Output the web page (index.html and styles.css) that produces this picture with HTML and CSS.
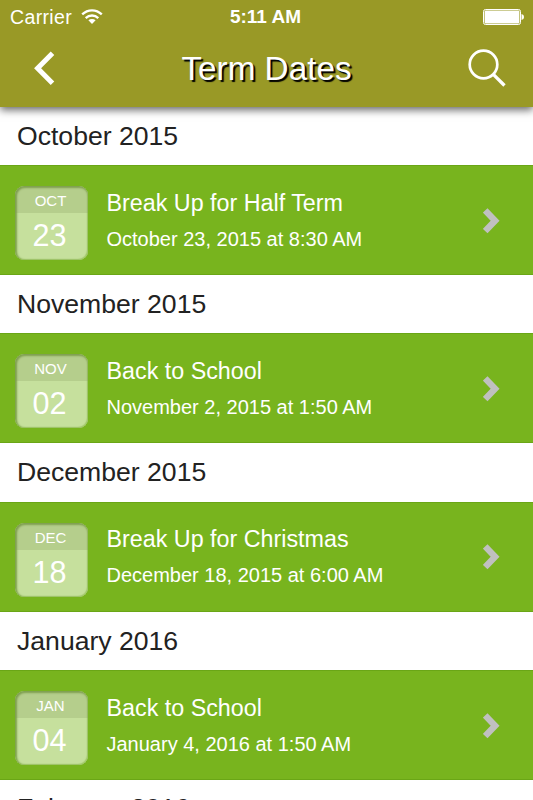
FILE: index.html
```html
<!DOCTYPE html>
<html lang="en">
<head>
    <meta charset="UTF-8">
    <meta name="viewport" content="width=device-width, initial-scale=1.0">
    <title>Term Dates</title>
    <link rel="stylesheet" href="styles.css">
</head>
<body>

<header class="header">
    <div class="status-bar">
        <div class="carrier">
            <span>Carrier</span>
            <svg class="wifi" width="22" height="16" viewBox="0 0 22 16" fill="none" stroke="#fff" stroke-width="2.3">
                <path d="M1.2 5.4 C6.8 -0.1 15.2 -0.1 20.8 5.4"/>
                <path d="M4.7 9.1 C8.3 5.6 13.7 5.6 17.3 9.1"/>
                <path d="M11 15 L7.4 11.3 C9.4 9.6 12.6 9.6 14.6 11.3 Z" fill="#fff" stroke="none"/>
            </svg>
        </div>
        <div class="clock">5:11 AM</div>
        <svg class="battery" width="42" height="17" viewBox="0 0 42 17">
            <rect x="0.5" y="0.5" width="37" height="15" rx="2" fill="none" stroke="#fff"/>
            <rect x="1.6" y="1.6" width="34.8" height="12.8" rx="1" fill="#fff"/>
            <path d="M38.5 5 C41.8 5.5 41.8 10.5 38.5 11 Z" fill="#fff"/>
        </svg>
    </div>
    <div class="nav-bar">
        <svg class="back" width="22" height="36" viewBox="0 0 22 36" fill="none" stroke="#fff" stroke-width="5">
            <path d="M18.5 3.2 L3.6 18.2 L18.5 33.2"/>
        </svg>
        <h1 class="title">Term Dates</h1>
        <svg class="search" width="38" height="38" viewBox="0 0 38 38" fill="none" stroke="#fff" stroke-width="2.7">
            <circle cx="15.5" cy="15.5" r="13.8"/>
            <path d="M25.3 25.3 L36.5 36.5" stroke-width="3.3"/>
        </svg>
    </div>
</header>

<main class="list">
    <h2 class="month">October 2015</h2>
    <div class="event">
        <div class="date">
            <div class="date-month">OCT</div>
            <div class="date-day">23</div>
        </div>
        <div class="info">
            <div class="name">Break Up for Half Term</div>
            <div class="time">October 23, 2015 at 8:30 AM</div>
        </div>
        <svg class="arrow" width="18" height="27" viewBox="0 0 18 27"><path d="M2.2 3.4 L12.1 13.7 L2.2 24"/></svg>
    </div>

    <h2 class="month">November 2015</h2>
    <div class="event">
        <div class="date">
            <div class="date-month">NOV</div>
            <div class="date-day">02</div>
        </div>
        <div class="info">
            <div class="name">Back to School</div>
            <div class="time">November 2, 2015 at 1:50 AM</div>
        </div>
        <svg class="arrow" width="18" height="27" viewBox="0 0 18 27"><path d="M2.2 3.4 L12.1 13.7 L2.2 24"/></svg>
    </div>

    <h2 class="month">December 2015</h2>
    <div class="event">
        <div class="date">
            <div class="date-month">DEC</div>
            <div class="date-day">18</div>
        </div>
        <div class="info">
            <div class="name">Break Up for Christmas</div>
            <div class="time">December 18, 2015 at 6:00 AM</div>
        </div>
        <svg class="arrow" width="18" height="27" viewBox="0 0 18 27"><path d="M2.2 3.4 L12.1 13.7 L2.2 24"/></svg>
    </div>

    <h2 class="month">January 2016</h2>
    <div class="event">
        <div class="date">
            <div class="date-month">JAN</div>
            <div class="date-day">04</div>
        </div>
        <div class="info">
            <div class="name">Back to School</div>
            <div class="time">January 4, 2016 at 1:50 AM</div>
        </div>
        <svg class="arrow" width="18" height="27" viewBox="0 0 18 27"><path d="M2.2 3.4 L12.1 13.7 L2.2 24"/></svg>
    </div>

    <h2 class="month">February 2016</h2>
</main>

</body>
</html>
```
FILE: styles.css
```css
* {
    box-sizing: border-box;
}
body {
    font-family: "Liberation Sans", Arial, sans-serif;
    margin: 0;
    height: 800px;
    overflow: hidden;
    display: flex;
    flex-direction: column;
    background-color: #fff;
    color: #fff;
}
.header {
    position: relative;
    flex: none;
    height: 107px;
    background-color: #999926;
    box-shadow: 0 3px 8px rgba(0, 0, 0, 0.6);
}
.status-bar {
    display: grid;
    grid-template-columns: 1fr auto 1fr;
    align-items: center;
    height: 34px;
    padding: 0 10px;
}
.carrier {
    display: flex;
    align-items: center;
    gap: 9px;
    font-size: 19.5px;
    letter-spacing: 0.35px;
}
.clock {
    margin-right: 2px;
    font-size: 19px;
    font-weight: bold;
}
.battery {
    justify-self: end;
    margin-right: -2px;
}
.nav-bar {
    display: flex;
    align-items: center;
    justify-content: space-between;
    height: 68px;
    padding: 0 27px 0 34px;
}
.title {
    margin: 2px 0 0 9px;
    font-size: 33.3px;
    font-weight: normal;
    text-shadow: 2px 2px 1px #000;
}
.list {
    flex: none;
}
.month {
    margin: 0;
    height: 58.4px;
    padding-left: 17px;
    font-size: 26.6px;
    font-weight: normal;
    line-height: 58px;
    color: #222;
}
.month:first-child {
    height: 58px;
}
.month:last-child {
    line-height: 57px;
}
.event {
    display: flex;
    align-items: center;
    height: 110px;
    padding: 0 32px 0 15px;
    background-color: #78b41e;
    border-top: 1px solid #6aa616;
    border-bottom: 1px solid #6aa616;
}
.date {
    width: 73px;
    height: 74px;
    margin-top: 6px;
    border-radius: 9px;
    overflow: hidden;
    text-align: center;
    background-color: #c6e09d;
    box-shadow: inset 1px 1px 2px 1px #7ea24c, inset -1px -1px 1px #a9cf70;
}
.date-month {
    height: 27px;
    padding-right: 2px;
    font-size: 15px;
    line-height: 30px;
    background-color: rgba(130, 150, 90, 0.25);
}
.date-day {
    padding-right: 4px;
    font-size: 30.6px;
    line-height: 45px;
}
.info {
    flex: 1;
    padding: 1px 0 0 18.5px;
}
.name {
    font-size: 23.3px;
    line-height: 36px;
}
.time {
    font-size: 20px;
    line-height: 36px;
}
.arrow {
    fill: none;
    stroke: #c0c0c0;
    stroke-width: 6.4;
}
```
